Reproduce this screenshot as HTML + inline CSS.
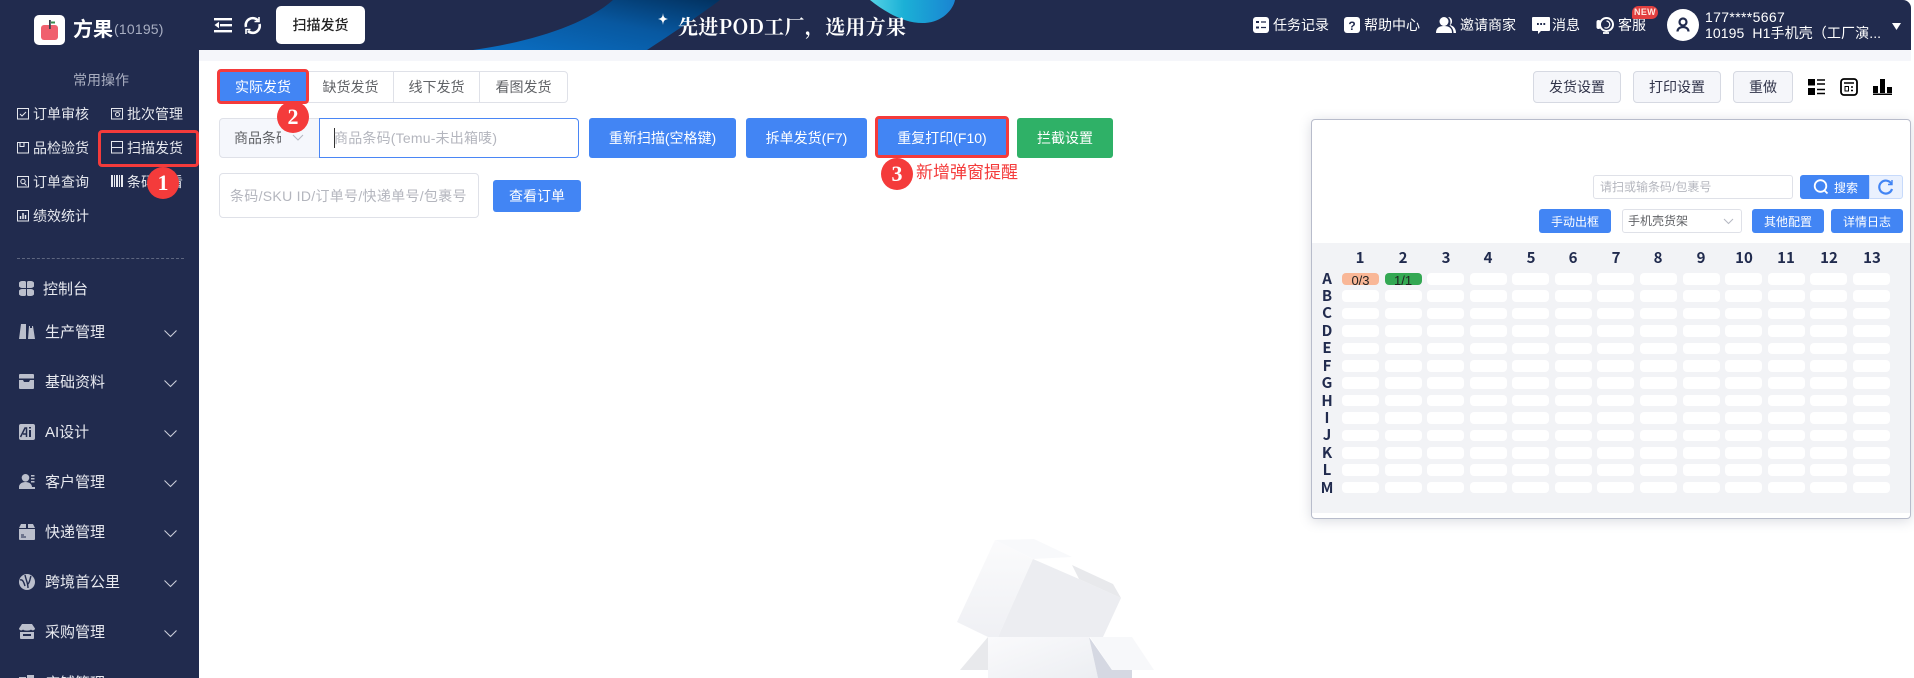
<!DOCTYPE html>
<html lang="zh"><head><meta charset="utf-8"><title>扫描发货</title>
<style>
*{box-sizing:border-box}
html,body{margin:0;padding:0;width:1914px;height:678px;overflow:hidden;background:#fff;font-family:"Liberation Sans","Noto Sans CJK SC",sans-serif;}
.a{position:absolute;white-space:nowrap}
#h{position:absolute;left:0;top:0;width:1911px;height:50px;background:#212B4E;border-top-right-radius:8px;overflow:hidden}
#s{position:absolute;left:0;top:0;width:199px;height:678px;background:#212B4E;overflow:hidden}
.t{font-size:14px;line-height:20px;color:#fff}
.q{font-size:14px;line-height:20px;color:#E6E8EE}
.m{font-size:15px;line-height:22px;color:#E8EAF0}
.btn{position:absolute;display:flex;align-items:center;justify-content:center;background:#4285F4;color:#fff;font-size:14px;border-radius:3px;white-space:nowrap}
.tab{position:absolute;top:71px;height:32px;border:1px solid #DFE1E8;display:flex;align-items:center;justify-content:center;font-size:14px;color:#606266;background:#fff}
.gbtn{position:absolute;top:71px;height:32px;border:1px solid #D6D9E2;background:#F5F6FA;border-radius:4px;display:flex;align-items:center;justify-content:center;font-size:14px;color:#303349}
.red{position:absolute;border:3px solid #F43B3B;border-radius:4px}
.cir{position:absolute;width:32px;height:32px;border-radius:50%;background:#F43B3B;color:#fff;font:bold 22px/32px "Liberation Serif",serif;text-align:center}
.pb{position:absolute;display:flex;align-items:center;justify-content:center;background:#4285F4;color:#fff;font-size:12px;border-radius:3px;height:24px;white-space:nowrap}
#g{position:absolute;left:1342px;top:273px;display:grid;grid-template-columns:repeat(13,37px);grid-auto-rows:11.6px;column-gap:5.58px;row-gap:5.82px}
#g i{display:block;background:#fff;border-radius:4px;font-style:normal;font-size:13px;line-height:15px;text-align:center;color:#222;overflow:hidden}
.c{position:absolute;top:249px;width:30px;text-align:center;font:bold 15px/18px "Noto Sans CJK SC",sans-serif;color:#212B4E}
.r{position:absolute;left:1312px;width:30px;text-align:center;font:bold 15px/17px "Noto Sans CJK SC",sans-serif;color:#212B4E}
</style></head><body>

<div id="h">
<svg class="a" style="left:0;top:0" width="1911" height="50">
<defs>
<linearGradient id="sw" x1="0" y1="1" x2="1" y2="0"><stop offset="0" stop-color="#0A6FC4"/><stop offset=".55" stop-color="#0858A0"/><stop offset="1" stop-color="#02315F"/></linearGradient>
<linearGradient id="bl" x1="0" y1="0" x2="1" y2="0"><stop offset="0" stop-color="#55D3E6"/><stop offset=".4" stop-color="#1BB0D6"/><stop offset="1" stop-color="#1A84D2"/></linearGradient>
</defs>
<path d="M473 50C530 42 585 25 613 0H720C700 15 670 35 647 50Z" fill="url(#sw)"/>
<path d="M870 0C885 12 905 24 925 23C942 22 953 10 955 0Z" fill="url(#bl)"/>
<path d="M663 13C663.5 17 664 18 668 19C664 20 663.5 21 663 25C662.500 21 662 20 658 19C662 18 662.500 17 663 13Z" fill="#fff"/>
</svg>
<div class="a" style="left:678px;top:12px;font:bold 20px/28px 'Noto Serif CJK SC',serif;color:#fff;letter-spacing:.3px">先进POD工厂，选用方果</div>

<svg class="a" style="left:214px;top:18px" width="18" height="15" fill="#fff"><rect width="18" height="2.400"/><rect x="6" y="6" width="12" height="2.400"/><rect y="12" width="18" height="2.400"/><path d="M5 3.800v6.400L.5 7z"/></svg>
<svg class="a" style="left:243px;top:16px" width="19" height="19" fill="none" stroke="#fff" stroke-width="2.600"><path d="M3 11A7 7 0 0 1 15 4.500"/><path d="M16.500 8A7 7 0 0 1 5 15"/><path d="M16 1v4.500h-4.500M3 18v-4.500h4.500" stroke-width="1.600"/></svg>
<div class="a" style="left:276px;top:6px;width:89px;height:38px;background:#fff;border-radius:5px;font-size:14px;line-height:38px;text-align:center;color:#222;font-weight:500">扫描发货</div>

<svg class="a" style="left:1253px;top:17px" width="16" height="16"><rect width="16" height="16" rx="3" fill="#fff"/><path d="M3 5h3M3 10.500h3" stroke="#212B4E" stroke-width="2"/><path d="M8 5h5M8 10.500h5" stroke="#212B4E" stroke-width="1.200"/></svg>
<div class="a t" style="left:1273px;top:15px">任务记录</div>
<svg class="a" style="left:1344px;top:17px" width="16" height="16"><rect width="16" height="16" rx="3" fill="#fff"/><text x="8" y="13" font-size="12" font-weight="bold" text-anchor="middle" fill="#212B4E" font-family="Liberation Sans">?</text></svg>
<div class="a t" style="left:1364px;top:15px">帮助中心</div>
<svg class="a" style="left:1436px;top:16px" width="22" height="17" fill="#fff"><circle cx="8" cy="5.500" r="4.500"/><path d="M0 17c0-5 3-7 8-7s8 2 8 7z"/><path d="M12 1c5 0 5 7 2 8 4 1 6 4 6 8h-2.500c0-4-2-6-4-7.500 1-1 2-6-1.500-8.500z"/></svg>
<div class="a t" style="left:1460px;top:15px">邀请商家</div>
<svg class="a" style="left:1532px;top:17px" width="18" height="17"><path d="M1 0h16a1 1 0 0 1 1 1v12a1 1 0 0 1-1 1H9l-3 3v-3H1a1 1 0 0 1-1-1V1a1 1 0 0 1 1-1z" fill="#fff"/><path d="M5 7h1.800M8.200 7H10M11.400 7h1.800" stroke="#212B4E" stroke-width="2"/></svg>
<div class="a t" style="left:1552px;top:15px">消息</div>
<svg class="a" style="left:1596px;top:16px" width="19" height="18" fill="none" stroke="#fff"><circle cx="10.500" cy="8.500" r="6.500" stroke-width="2"/><path d="M10.500 5a3.500 3.500 0 1 1-2 6.500" stroke-width="1.200"/><path d="M2.500 6v5" stroke-width="4" stroke-linecap="round"/><path d="M7 17h6" stroke-width="1.800"/></svg>
<div class="a t" style="left:1618px;top:15px">客服</div>
<div class="a" style="left:1632px;top:6px;width:26px;height:13px;border-radius:7px 7px 7px 2px;background:#E23F3F;color:#FFE8E0;font:bold 9px/13px 'Liberation Sans',sans-serif;text-align:center;letter-spacing:.3px">NEW</div>
<div class="a" style="left:1667px;top:9px;width:32px;height:32px;border-radius:50%;background:#fff"></div>
<svg class="a" style="left:1676px;top:17px" width="14" height="16" fill="none" stroke="#212B4E" stroke-width="2.200"><circle cx="7" cy="5" r="3.500"/><path d="M1.500 14.500c0-6 11-6 11 0"/></svg>
<div class="a" style="left:1705px;top:8px;font-size:14px;line-height:18px;color:#fff;letter-spacing:.35px">177****5667</div>
<div class="a" style="left:1705px;top:24px;font-size:14px;line-height:18px;color:#fff;letter-spacing:.1px">10195&nbsp; H1手机壳（工厂演...</div>
<svg class="a" style="left:1892px;top:22px" width="9" height="9"><path d="M0 1h9L4.500 8z" fill="#fff"/></svg>
</div>

<div class="a" style="left:199px;top:50px;width:1712px;height:11px;background:#F5F6FA"></div>

<div id="s">
<div class="a" style="left:34px;top:15px;width:31px;height:30px;background:#fff;border-radius:5px"></div>
<svg class="a" style="left:41px;top:19px" width="18" height="22"><rect x="0" y="6" width="17" height="15" rx="3" fill="#F0606E"/><rect x="8" y="1" width="1.800" height="9" fill="#3A3F4C"/><path d="M10 2.500h4v2h-4z" fill="#3A8C4E"/></svg>
<div class="a" style="left:73px;top:15px;font-size:20px;line-height:30px;font-weight:bold;color:#fff">方果</div>
<div class="a" style="left:114px;top:19px;font-size:14px;line-height:20px;color:#A8AEC2;letter-spacing:.2px">(10195)</div>

<div class="a" style="left:73px;top:70px;font-size:14px;line-height:20px;color:#A9AEC0">常用操作</div>

<svg class="a" style="left:17px;top:108px" width="13" height="12" fill="none" stroke="#E6E8EE"><rect x=".5" y=".5" width="11" height="10.500"/><path d="M3 6l2 2 4-4"/></svg>
<div class="a q" style="left:33px;top:104px">订单审核</div>
<svg class="a" style="left:111px;top:108px" width="13" height="12" fill="none" stroke="#E6E8EE"><rect x=".5" y=".5" width="11" height="10.500"/><circle cx="6.500" cy="6.500" r="2"/><path d="M2 3h8"/></svg>
<div class="a q" style="left:127px;top:104px">批次管理</div>
<svg class="a" style="left:17px;top:142px" width="13" height="12" fill="none" stroke="#E6E8EE"><rect x=".5" y=".5" width="11" height="10.500"/><path d="M3 .5v4h4v-4"/></svg>
<div class="a q" style="left:33px;top:138px">品检验货</div>
<svg class="a" style="left:111px;top:141px" width="13" height="13" fill="none" stroke="#E6E8EE"><rect x=".5" y=".5" width="11" height="11.500"/><path d="M0 6.500h12"/></svg>
<div class="a q" style="left:127px;top:138px">扫描发货</div>
<svg class="a" style="left:17px;top:176px" width="13" height="12" fill="none" stroke="#E6E8EE"><rect x=".5" y=".5" width="11" height="10.500"/><circle cx="6" cy="5.500" r="2.200"/><path d="M7.500 7.500l2 2"/></svg>
<div class="a q" style="left:33px;top:172px">订单查询</div>
<svg class="a" style="left:111px;top:175px" width="13" height="13" fill="#E6E8EE"><rect width="2" height="12"/><rect x="3" width="1" height="12"/><rect x="5" width="2" height="12"/><rect x="8" width="1" height="12"/><rect x="10" width="2" height="12"/></svg>
<div class="a q" style="left:127px;top:172px">条码查看</div>
<svg class="a" style="left:17px;top:210px" width="13" height="12" fill="none" stroke="#E6E8EE"><rect x=".5" y=".5" width="11" height="10.500"/><path d="M3.500 9V6M6 9V3M8.500 9V5" stroke-width="1.500"/></svg>
<div class="a q" style="left:33px;top:206px">绩效统计</div>

<div class="a" style="left:17px;top:258px;width:167px;border-top:1px dashed #5E667F"></div>

<svg class="a" style="left:19px;top:281px" width="15" height="15" fill="#BBBFCC"><path d="M3 0h2.500a1.500 1.500 0 0 1 1.500 1.500C7 4 7 7 7 7H3A3 3 0 0 1 3 0zM12 0H9.500A1.500 1.500 0 0 0 8 1.500C8 4 8 7 8 7h4a3 3 0 0 0 0-7zM3 15h2.500A1.500 1.500 0 0 0 7 13.500C7 11 7 8 7 8H3a3.500 3.500 0 0 0 0 7zM12 15H9.500A1.500 1.500 0 0 1 8 13.500C8 11 8 8 8 8h4a3.500 3.500 0 0 1 0 7z"/></svg>
<div class="a m" style="left:43px;top:279px">控制台</div>

<svg class="a" style="left:19px;top:324px" width="16" height="15" fill="#BBBFCC"><path d="M2 0h5v15H0zM10 2h1v2h2V2h1l2 13H9z"/></svg>
<div class="a m" style="left:45px;top:322px">生产管理</div>
<svg class="a" style="left:19px;top:374px" width="15" height="15" fill="#BBBFCC"><path d="M1 0h13a1 1 0 0 1 1 1v3.500H0V1a1 1 0 0 1 1-1zM0 6h4l1 2h5l1-2h4v8a1 1 0 0 1-1 1H1a1 1 0 0 1-1-1z"/></svg>
<div class="a m" style="left:45px;top:372px">基础资料</div>
<svg class="a" style="left:19px;top:424px" width="16" height="16"><rect width="16" height="16" rx="2" fill="#BBBFCC"/><path d="M1.500 13L6 4h1.500v9M4 10h3.500" stroke="#212B4E" stroke-width="1.500" fill="none"/><path d="M11 3v1.500M11 6v7" stroke="#212B4E" stroke-width="2"/></svg>
<div class="a m" style="left:45px;top:422px">AI设计</div>
<svg class="a" style="left:19px;top:474px" width="16" height="15" fill="#BBBFCC"><circle cx="6.500" cy="3.800" r="3.800"/><path d="M0 15v-2c0-3 3-5 6.500-5s6.500 2 6.500 5h3v2z"/><path d="M12 1h3.500v1.500H12zM12 4h3.500v1.500H12zM12 7h3.500v1.500H12z"/></svg>
<div class="a m" style="left:45px;top:472px">客户管理</div>
<svg class="a" style="left:19px;top:524px" width="16" height="16" fill="#BBBFCC"><path d="M2 0h5v4H0zM9 0h5l2 4H9zM0 5h16v10a1 1 0 0 1-1 1H1a1 1 0 0 1-1-1z"/><path d="M2 11h3M2 13h5" stroke="#212B4E"/></svg>
<div class="a m" style="left:45px;top:522px">快递管理</div>
<svg class="a" style="left:19px;top:574px" width="16" height="16"><circle cx="8" cy="8" r="8" fill="#BBBFCC"/><path d="M1 6c3-1 4 3 5 6M6 1c1 5 3 8 3 13M9 10c2-2 2-6 3-8" stroke="#212B4E" stroke-width="1.400" fill="none"/></svg>
<div class="a m" style="left:45px;top:572px">跨境首公里</div>
<svg class="a" style="left:19px;top:624px" width="16" height="15" fill="#BBBFCC"><path d="M3 0h10l3 4.500c0 2-3 2.500-4 1-1 1.500-7 1.500-8 0-1 1.500-4 1-4-1zM1 8h14v6a1 1 0 0 1-1 1H2a1 1 0 0 1-1-1zM4 10v2h8v-2z" fill-rule="evenodd"/></svg>
<div class="a m" style="left:45px;top:622px">采购管理</div>
<svg class="a" style="left:19px;top:675px" width="16" height="15" fill="#BBBFCC"><rect y="2" width="7" height="13"/><rect x="8" width="7" height="15"/></svg>
<div class="a m" style="left:45px;top:673px">店铺管理</div>

<svg class="a" style="left:164px;top:330px" width="13" height="354" fill="none" stroke="#C9CDD8" stroke-width="1.100"><path d="M.5 .5l6 6 6-6M.5 50.500l6 6 6-6M.5 100.500l6 6 6-6M.5 150.500l6 6 6-6M.5 200.500l6 6 6-6M.5 250.500l6 6 6-6M.5 300.500l6 6 6-6"/></svg>
</div>

<div class="tab" style="left:307px;width:87px;border-radius:0;padding-left:0">缺货发货</div>
<div class="tab" style="left:393px;width:87px;border-radius:0">线下发货</div>
<div class="tab" style="left:479px;width:89px;border-radius:0 4px 4px 0">看图发货</div>
<div class="btn" style="left:219px;top:71px;width:88px;height:32px">实际发货</div>
<div class="red" style="left:217px;top:69px;width:92px;height:35px"></div>

<div class="a" style="left:219px;top:118px;width:101px;height:40px;background:#F5F7FC;border:1px solid #DFE1E8;border-radius:4px 0 0 4px"></div>
<div class="a" style="left:234px;top:128px;width:47px;overflow:hidden;font-size:14px;line-height:20px;color:#606266">商品条码</div>
<svg class="a" style="left:292px;top:134px" width="12" height="8" fill="none" stroke="#B5B8C2"><path d="M1 1l5 5 5-5"/></svg>
<div class="a" style="left:319px;top:118px;width:260px;height:40px;background:#fff;border:1px solid #4A86F5;border-radius:0 4px 4px 0"></div>
<div class="a" style="left:334px;top:128px;width:1px;height:20px;background:#333"></div>
<div class="a" style="left:334px;top:128px;font-size:14px;line-height:20px;color:#B4B6BE;letter-spacing:.2px">商品条码(Temu-未出箱唛)</div>
<div class="cir" style="left:277px;top:101px">2</div>
<div class="btn" style="left:589px;top:118px;width:147px;height:40px">重新扫描(空格键)</div>
<div class="btn" style="left:746px;top:118px;width:121px;height:40px">拆单发货(F7)</div>
<div class="btn" style="left:877px;top:118px;width:130px;height:39px">重复打印(F10)</div>
<div class="red" style="left:875px;top:116px;width:134px;height:42px"></div>
<div class="btn" style="left:1017px;top:118px;width:96px;height:40px;background:#2FB167">拦截设置</div>
<div class="cir" style="left:881px;top:158px">3</div>
<div class="a" style="left:916px;top:161px;font-size:17px;line-height:24px;color:#F43B3B">新增弹窗提醒</div>

<div class="a" style="left:219px;top:173px;width:260px;height:45px;border:1px solid #DFE1E8;border-radius:4px"></div>
<div class="a" style="left:230px;top:186px;width:245px;overflow:hidden;font-size:14px;line-height:20px;color:#B4B6BE;letter-spacing:.3px">条码/SKU ID/订单号/快递单号/包裹号</div>
<div class="btn" style="left:493px;top:180px;width:88px;height:32px">查看订单</div>

<div class="cir" style="left:147px;top:167px">1</div>
<div class="red" style="left:98px;top:130px;width:101px;height:37px"></div>

<div class="gbtn" style="left:1533px;width:88px">发货设置</div>
<div class="gbtn" style="left:1633px;width:88px">打印设置</div>
<div class="gbtn" style="left:1733px;width:60px">重做</div>
<svg class="a" style="left:1808px;top:79px" width="18" height="16"><rect width="7" height="6.500"/><rect y="9" width="7" height="7"/><path d="M9 1h8M9 5h8M9 10.500h8M9 14.500h8" stroke="#000" stroke-width="1.500"/></svg>
<svg class="a" style="left:1840px;top:78px" width="19" height="18" fill="none" stroke="#000"><rect x="1" y="1" width="16" height="16" rx="3" stroke-width="1.800"/><path d="M4 5h10" stroke-width="1.500"/><rect x="5" y="8.500" width="3.500" height="4.500"/><path d="M11 9h2M11 12.500h2" stroke-width="1.500"/></svg>
<svg class="a" style="left:1873px;top:79px" width="19" height="16"><rect y="7" width="5" height="7"/><rect x="7" width="5" height="14"/><rect x="14" y="8" width="5" height="6"/><rect y="14.500" width="19" height="1.500"/></svg>

<!-- floating panel -->
<div class="a" style="left:1311px;top:119px;width:600px;height:400px;background:#fff;border:1px solid #B8BCCB;border-radius:4px;box-shadow:0 2px 12px rgba(80,90,120,.22)"></div>
<div class="a" style="left:1312px;top:243px;width:598px;height:270px;background:#F2F3F6"></div>

<div class="a" style="left:1593px;top:175px;width:200px;height:24px;border:1px solid #DFE1E8;border-radius:3px;background:#fff"></div>
<div class="a" style="left:1600px;top:179px;font-size:12px;line-height:16px;color:#B4B6BE">请扫或输条码/包裹号</div>
<div class="pb" style="left:1800px;top:175px;width:69px;border-radius:3px 0 0 3px;padding-left:2px"><svg width="16" height="16" fill="none" stroke="#fff" stroke-width="1.800" style="margin-right:5px"><circle cx="7.500" cy="7" r="5.800"/><path d="M11.500 11.500l3 3"/></svg>搜索</div>
<div class="a" style="left:1869px;top:175px;width:34px;height:24px;background:#EAF1FE;border:1px solid #C7DAFB;border-radius:0 3px 3px 0"></div>
<svg class="a" style="left:1878px;top:179px" width="16" height="16" fill="none" stroke="#4285F4" stroke-width="2.200"><path d="M13.500 5A6.500 6.500 0 1 0 14 10"/><path d="M14 1v4.500H10" stroke-width="1.400"/></svg>
<div class="pb" style="left:1539px;top:209px;width:72px">手动出框</div>
<div class="a" style="left:1622px;top:209px;width:120px;height:24px;border:1px solid #DFE1E8;border-radius:3px;background:#fff"></div>
<div class="a" style="left:1628px;top:213px;font-size:12px;line-height:16px;color:#606266">手机壳货架</div>
<svg class="a" style="left:1723px;top:218px" width="11" height="7" fill="none" stroke="#B5B8C2"><path d="M1 1l4.500 4.500L10 1"/></svg>
<div class="pb" style="left:1752px;top:209px;width:72px">其他配置</div>
<div class="pb" style="left:1831px;top:209px;width:72px">详情日志</div>

<div class="c" style="left:1345px">1</div><div class="c" style="left:1388px">2</div><div class="c" style="left:1431px">3</div><div class="c" style="left:1473px">4</div><div class="c" style="left:1516px">5</div><div class="c" style="left:1558px">6</div><div class="c" style="left:1601px">7</div><div class="c" style="left:1643px">8</div><div class="c" style="left:1686px">9</div><div class="c" style="left:1729px">10</div><div class="c" style="left:1771px">11</div><div class="c" style="left:1814px">12</div><div class="c" style="left:1857px">13</div>

<div class="r" style="top:270px">A</div><div class="r" style="top:287px">B</div><div class="r" style="top:304px">C</div><div class="r" style="top:322px">D</div><div class="r" style="top:339px">E</div><div class="r" style="top:357px">F</div><div class="r" style="top:374px">G</div><div class="r" style="top:392px">H</div><div class="r" style="top:409px">I</div><div class="r" style="top:426px">J</div><div class="r" style="top:444px">K</div><div class="r" style="top:461px">L</div><div class="r" style="top:479px">M</div>

<div id="g">
<i style="background:#F9B797">0/3</i><i style="background:#34A853">1/1</i><i></i><i></i><i></i><i></i><i></i><i></i><i></i><i></i><i></i><i></i><i></i>
<i></i><i></i><i></i><i></i><i></i><i></i><i></i><i></i><i></i><i></i><i></i><i></i><i></i>
<i></i><i></i><i></i><i></i><i></i><i></i><i></i><i></i><i></i><i></i><i></i><i></i><i></i>
<i></i><i></i><i></i><i></i><i></i><i></i><i></i><i></i><i></i><i></i><i></i><i></i><i></i>
<i></i><i></i><i></i><i></i><i></i><i></i><i></i><i></i><i></i><i></i><i></i><i></i><i></i>
<i></i><i></i><i></i><i></i><i></i><i></i><i></i><i></i><i></i><i></i><i></i><i></i><i></i>
<i></i><i></i><i></i><i></i><i></i><i></i><i></i><i></i><i></i><i></i><i></i><i></i><i></i>
<i></i><i></i><i></i><i></i><i></i><i></i><i></i><i></i><i></i><i></i><i></i><i></i><i></i>
<i></i><i></i><i></i><i></i><i></i><i></i><i></i><i></i><i></i><i></i><i></i><i></i><i></i>
<i></i><i></i><i></i><i></i><i></i><i></i><i></i><i></i><i></i><i></i><i></i><i></i><i></i>
<i></i><i></i><i></i><i></i><i></i><i></i><i></i><i></i><i></i><i></i><i></i><i></i><i></i>
<i></i><i></i><i></i><i></i><i></i><i></i><i></i><i></i><i></i><i></i><i></i><i></i><i></i>
<i></i><i></i><i></i><i></i><i></i><i></i><i></i><i></i><i></i><i></i><i></i><i></i><i></i>
</div>

<!-- empty box illustration -->
<svg class="a" style="left:0;top:0;pointer-events:none" width="1914" height="678">
<defs>
<linearGradient id="bx1" x1="0" y1="0" x2="0" y2="1"><stop offset="0" stop-color="#FBFBFC"/><stop offset="1" stop-color="#EFF0F4"/></linearGradient>
<linearGradient id="bx2" x1="0" y1="0" x2="1" y2="1"><stop offset="0" stop-color="#FAFAFC"/><stop offset="1" stop-color="#ECEEF2"/></linearGradient>
</defs>
<path d="M995 540L1034 539L1072 557L1033 559Z" fill="#F8F9FB"/>
<path d="M995 540L1033 559L998 637H988L957 622Z" fill="url(#bx1)"/>
<path d="M1033 559L1079 579L1121 598L1103 637H998Z" fill="#ECEDF1"/>
<path d="M1072 565L1113 584L1121 598L1079 579Z" fill="#E8E9EC"/>
<path d="M988 637V670H960Z" fill="#E8E9EC"/>
<path d="M988 637H1089L1098 678H988Z" fill="url(#bx2)"/>
<path d="M1089 637L1112 670H1132V678H1098Z" fill="#D5D8E2"/>
<path d="M1090 637H1132L1154 670H1112Z" fill="#F7F8FA"/>
</svg>
</body></html>
